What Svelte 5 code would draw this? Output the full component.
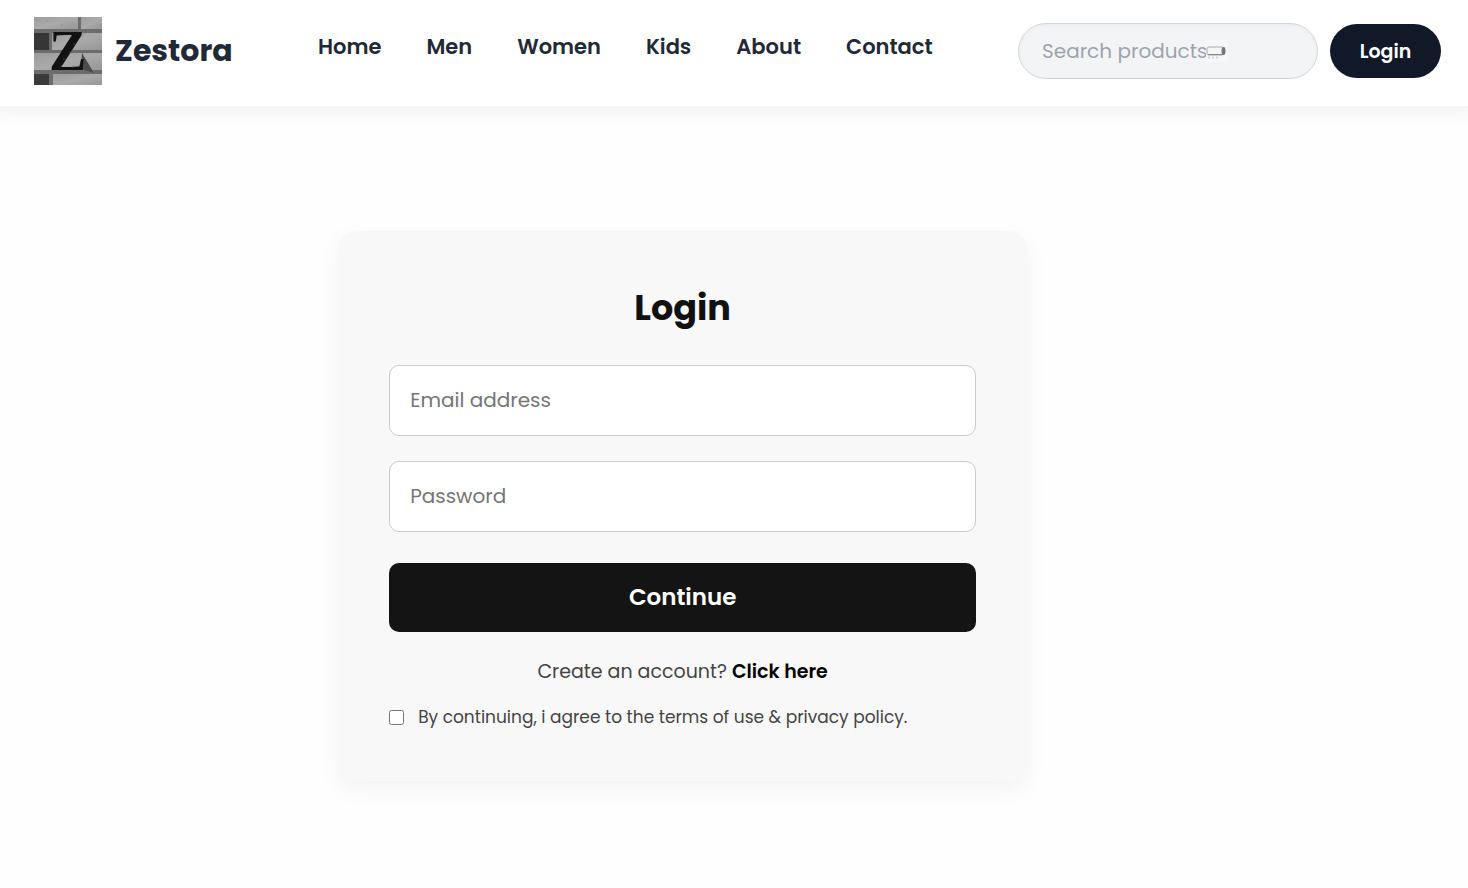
<script>
  const links = ['Home', 'Men', 'Women', 'Kids', 'About', 'Contact'];
  let search = $state('');
  let email = $state('');
  let password = $state('');
  let agreed = $state(false);
</script>

<header class="navbar">
  <a class="brand" href="#home">
    <svg class="logo" viewBox="0 0 68 68" aria-hidden="true">
      <defs>
        <linearGradient id="brick" x1="0" y1="0" x2="1" y2="1">
          <stop offset="0" stop-color="#9c9c9c" />
          <stop offset="0.5" stop-color="#aaa" />
          <stop offset="1" stop-color="#969696" />
        </linearGradient>
      </defs>
      <rect width="68" height="68" fill="#6c6c6c" />
      <g fill="url(#brick)">
        <rect width="44" height="12" />
        <rect x="47" width="21" height="12" />
        <rect x="18" y="16" width="50" height="17" />
        <rect y="36" width="68" height="17" />
        <rect x="19" y="57" width="49" height="11" />
      </g>
      <rect y="16" width="15" height="17" fill="#363636" />
      <rect y="57" width="15" height="11" fill="#3b3b3b" />
      <path d="M48 36 60 56 47 52Z" fill="#4c4c4c" />
      <text x="15" y="53" font-family="Liberation Serif, serif" font-weight="700" font-size="56" fill="#111">Z</text>
      <g fill="#555" opacity="0.5">
        <circle cx="30" cy="42" r="1" /><circle cx="36" cy="35" r="1" />
        <circle cx="27" cy="49" r="1" /><circle cx="39" cy="50" r="1" />
        <circle cx="40" cy="27" r="1" />
        <circle cx="13" cy="4" r="0.6" /><circle cx="28" cy="8" r="0.6" />
      </g>
    </svg>
    <span>Zestora</span>
  </a>
  <nav>
    <ul>
      {#each links as link}
        <li><a href="#{link.toLowerCase()}">{link}</a></li>
      {/each}
    </ul>
  </nav>
  <div class="actions">
    <div class="search">
      <input type="search" aria-label="Search products" placeholder="Search products" bind:value={search} />
      {#if !search}
        <svg viewBox="0 0 22 22" aria-hidden="true">
          <rect width="22" height="22" fill="#f6f7f7" />
          <rect x="1" y="7" width="17" height="8" rx="2" fill="#f5f5f5" stroke="#aaa" />
          <path d="M2 14.500h15" stroke="#888" />
          <ellipse cx="17.500" cy="11" rx="2" ry="4" fill="#777" />
          <path d="M2 17.500h2M6 17.500h2M10 17.500h2" stroke="#d2d4dc" stroke-width="2" />
        </svg>
      {/if}
    </div>
    <button class="login" type="button">Login</button>
  </div>
</header>

<main>
  <form class="card" onsubmit={(e) => e.preventDefault()}>
    <h1>Login</h1>
    <div class="fields">
      <input type="email" aria-label="Email address" placeholder="Email address" bind:value={email} />
      <input type="password" aria-label="Password" placeholder="Password" bind:value={password} />
    </div>
    <button class="continue" type="submit">Continue</button>
    <p>Create an account? <a href="#signup">Click here</a></p>
    <label class="terms">
      <input type="checkbox" bind:checked={agreed} />
      <span>By continuing, i agree to the terms of use &amp; privacy policy.</span>
    </label>
  </form>
</main>

<style>
  :global(body) {
    margin: 0;
    background: #fefefe;
    font-family: Poppins, Inter, sans-serif;
  }
  * { box-sizing: border-box; }
  a { color: inherit; text-decoration: none; }
  input, button { font-family: inherit; }
  button { border: 0; color: #fff; cursor: pointer; }

  .navbar {
    display: flex;
    align-items: center;
    justify-content: space-between;
    gap: 24px;
    padding: 17px 27px 21px 34px;
    background: #fff;
    box-shadow: 0 -6px 20px 10px rgb(0 0 0 / 6%);
  }
  .brand {
    display: flex;
    align-items: center;
    gap: 13px;
    color: #1f2937;
    font-size: 30px;
    font-weight: 700;
    line-height: 40px;
  }
  .logo { width: 68px; height: 68px; }
  ul {
    display: flex;
    gap: 45px;
    margin: 0;
    padding: 0 0 8px;
    list-style: none;
    color: #1f2937;
    font-size: 21px;
    font-weight: 600;
    line-height: 32px;
  }
  .actions { display: flex; align-items: center; gap: 12px; }
  .search { position: relative; }
  .search input {
    display: block;
    width: 300px;
    height: 56px;
    padding: 0 23px;
    border: 1px solid #d1d5db;
    border-radius: 28px;
    background: #f3f4f6;
    box-shadow: inset 0 2px 5px rgb(0 0 0 / 3%);
    font-size: 20px;
    appearance: none;
  }
  .search input::placeholder { color: #9ca3af; opacity: 1; }
  .search svg {
    position: absolute;
    top: 17px;
    left: 188px;
    width: 22px;
    height: 22px;
    pointer-events: none;
  }
  .login {
    width: 111px;
    height: 54px;
    border-radius: 27px;
    background: #111827;
    font-size: 19px;
    font-weight: 600;
  }

  main {
    display: flex;
    justify-content: center;
    padding: 125px 7vw 107px 0;
  }
  .card {
    width: 100%;
    max-width: 687px;
    padding: 53px 50px 49px;
    border-radius: 16px;
    background: #f8f8f8;
    box-shadow: 0 8px 25px rgb(0 0 0 / 5%);
  }
  h1 {
    margin: 0 0 33px;
    color: #111;
    font-size: 35px;
    font-weight: 700;
    line-height: 48px;
    text-align: center;
  }
  .fields { display: grid; gap: 25px; }
  .fields input {
    width: 100%;
    height: 71px;
    padding: 0 20px 2px;
    border: 1px solid #ccc;
    border-radius: 10px;
    background: #fff;
    font-size: 20px;
  }
  .fields input::placeholder { color: #757575; }
  .continue {
    display: block;
    width: 100%;
    height: 69px;
    margin-top: 31px;
    padding: 0 0 2px;
    border-radius: 10px;
    background: #141414;
    font-size: 23px;
    font-weight: 600;
  }
  p {
    margin: 25px 0 15px;
    color: #444;
    font-size: 19px;
    line-height: 30px;
    text-align: center;
  }
  p a { color: #000; font-weight: 600; }
  .terms {
    display: flex;
    align-items: center;
    gap: 14px;
    color: #444;
    font-size: 17px;
    line-height: 30px;
  }
  .terms input {
    flex: none;
    width: 15px;
    height: 15px;
    margin: 0;
  }
</style>
